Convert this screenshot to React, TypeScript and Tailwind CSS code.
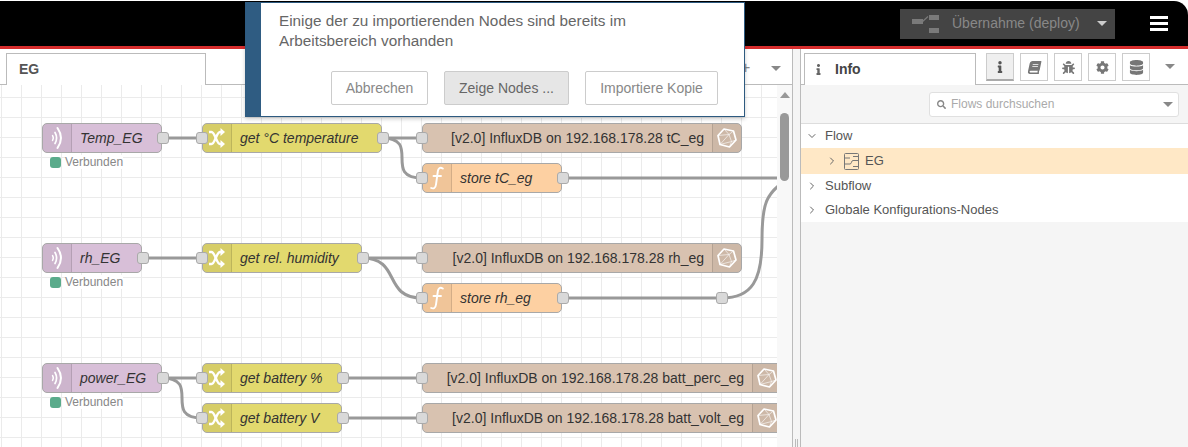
import { FaBook, FaBug, FaCog, FaDatabase, FaInfo, FaSearch } from "react-icons/fa";
import { ChevronDown, ChevronRight } from "lucide-react";

type NodeKind = "mqtt" | "change" | "function" | "influx";

type FlowNode = {
  label: string;
  kind: NodeKind;
  x: number;
  y: number;
  w: number;
  status?: boolean;
};

const nodes: FlowNode[] = [
  { label: "Temp_EG", kind: "mqtt", x: 42, y: 123, w: 120, status: true },
  { label: "get °C temperature", kind: "change", x: 202, y: 123, w: 180 },
  { label: "[v2.0] InfluxDB on 192.168.178.28 tC_eg", kind: "influx", x: 422, y: 123, w: 320 },
  { label: "store tC_eg", kind: "function", x: 422, y: 163, w: 140 },
  { label: "rh_EG", kind: "mqtt", x: 42, y: 243, w: 100, status: true },
  { label: "get rel. humidity", kind: "change", x: 202, y: 243, w: 160 },
  { label: "[v2.0] InfluxDB on 192.168.178.28 rh_eg", kind: "influx", x: 422, y: 243, w: 320 },
  { label: "store rh_eg", kind: "function", x: 422, y: 283, w: 140 },
  { label: "power_EG", kind: "mqtt", x: 42, y: 363, w: 120, status: true },
  { label: "get battery %", kind: "change", x: 202, y: 363, w: 140 },
  { label: "get battery V", kind: "change", x: 202, y: 403, w: 140 },
  { label: "[v2.0] InfluxDB on 192.168.178.28 batt_perc_eg", kind: "influx", x: 422, y: 363, w: 360 },
  { label: "[v2.0] InfluxDB on 192.168.178.28 batt_volt_eg", kind: "influx", x: 422, y: 403, w: 360 },
];

const wires = [
  "M162 138H202",
  "M382 138H422",
  "M382 138C422 138 382 178 422 178",
  "M562 178H790",
  "M142 258H202",
  "M362 258H422",
  "M362 258C402 258 382 298 422 298",
  "M562 298H722",
  "M722 298C752 298 762 280 762 240C762 205 765 192 790 178",
  "M162 378H202",
  "M162 378C202 378 162 418 202 418",
  "M342 378H422",
  "M342 418H422",
];

const nodeColors: Record<NodeKind, string> = {
  mqtt: "bg-[#d8bfd8]",
  change: "bg-[#e2d96e]",
  function: "bg-[#fdd0a2]",
  influx: "bg-[#d8c2b0]",
};

function MqttIcon() {
  return (
    <svg width="12" height="24" viewBox="0 0 12 24" fill="none" stroke="#fff" strokeLinecap="round">
      <path d="M1.5 9.5C2.5 11 2.5 13 1.5 14.5" strokeWidth="1.4" />
      <path d="M4 6.5C6 10 6 14 4 17.5" strokeWidth="1.7" />
      <path d="M6.5 2C11 8.5 11 15.5 6.5 22" strokeWidth="2" />
    </svg>
  );
}

function ShuffleIcon() {
  return (
    <svg width="16" height="20" viewBox="0 0 16 20">
      <path d="M0 4H2.5C6 4 7.5 16 11 16H12" fill="none" stroke="#fff" strokeWidth="2.4" />
      <path d="M0 16H2.5C6 16 7.5 4 11 4H12" fill="none" stroke="#fff" strokeWidth="2.4" />
      <path d="M11.5 0L16 4L11.5 8ZM11.5 12L16 16L11.5 20Z" fill="#fff" />
    </svg>
  );
}

function FunctionIcon() {
  return (
    <svg width="14" height="24" viewBox="0 0 14 24" fill="none" stroke="#fff" strokeWidth="1.9" strokeLinecap="round">
      <path d="M12.8 2.5C9.8 0.8 8.2 2.5 7.8 5.5L6 18.5C5.6 22 3.5 23 1.2 22" />
      <path d="M3.5 10H11" />
    </svg>
  );
}

function InfluxIcon() {
  return (
    <svg width="20" height="20" viewBox="0 0 20 20" fill="none" stroke="#fff" strokeLinejoin="round">
      <path d="M7 1L16.5 3L19 12L12.5 19L3 16.5L1 7.5Z" strokeWidth="1.7" />
      <path d="M1 7.5L12 6.5L16.5 3M12 6.5L14.5 13.5L3 16.5L12 6.5M14.5 13.5L19 12M14.5 13.5L12.5 19M7 1L12 6.5" strokeWidth="0.6" />
    </svg>
  );
}

function Port({ side }: { side: "left" | "right" }) {
  return (
    <span
      className={`absolute top-[7.5px] h-[12px] w-[12px] rounded-[3px] border border-[#aaa] bg-[#d9d9d9] ${
        side === "left" ? "left-[-7.5px]" : "right-[-7.5px]"
      }`}
    />
  );
}

function CanvasNode({ node }: { node: FlowNode }) {
  const { kind } = node;
  const iconRight = kind === "influx";
  return (
    <div className="absolute" style={{ left: node.x, top: node.y - 85, width: node.w }}>
      <div
        className={`relative flex h-[30px] items-center rounded-[5px] border-[1.5px] border-[#a8a8a8] text-[14px] text-[#333] ${nodeColors[kind]}`}
      >
        {!iconRight && (
          <span className="flex h-full w-[29px] shrink-0 items-center justify-center rounded-l-[4px] border-r border-[#0000001f] bg-[#0000000d]">
            {kind === "mqtt" && <MqttIcon />}
            {kind === "change" && <ShuffleIcon />}
            {kind === "function" && <FunctionIcon />}
          </span>
        )}
        <span className={`flex-1 whitespace-nowrap ${iconRight ? "pr-2 text-right" : "pl-[8px] italic"}`}>
          {node.label}
        </span>
        {iconRight && (
          <span className="flex h-full w-[29px] shrink-0 items-center justify-center rounded-r-[4px] border-l border-[#0000001f] bg-[#0000000d]">
            <InfluxIcon />
          </span>
        )}
        {kind !== "mqtt" && <Port side="left" />}
        {kind !== "influx" && <Port side="right" />}
      </div>
      {node.status && (
        <div className="mt-[2px] ml-2 flex items-center gap-1 text-[12px] leading-[14px] text-[#888]">
          <span className="h-[11px] w-[11px] rounded-[3px] bg-[#5aab8b]" />
          <span className="bg-white">Verbunden</span>
        </div>
      )}
    </div>
  );
}

function DeployIcon() {
  return (
    <svg width="28" height="18" viewBox="0 0 28 18" fill="#7a7a7a">
      <rect x="0" y="4" width="11" height="5" />
      <rect x="17" y="0" width="10" height="5" />
      <rect x="17" y="13" width="10" height="5" />
      <path d="M10 7L16 1.5" stroke="#7a7a7a" strokeWidth="1.2" />
    </svg>
  );
}

function Caret({ className }: { className: string }) {
  return <span className={`block h-0 w-0 border-x-[5px] border-t-[5px] border-x-transparent ${className}`} />;
}

function Header() {
  return (
    <header className="mt-px flex h-[48px] items-center justify-end rounded-tr-[14px] border-b-[3px] border-[#d62d2d] bg-black">
      <div className="flex h-[30px] w-[215px] items-center bg-[#444] pl-3 pr-[8px] text-[14px] text-[#888]">
        <DeployIcon />
        <span className="ml-[12px] flex-1 whitespace-nowrap">Übernahme (deploy)</span>
        <Caret className="border-t-[#ccc]" />
      </div>
      <div className="mr-[20px] ml-[35px] flex w-[18px] flex-col gap-[3px]">
        <span className="h-[3px] bg-white" />
        <span className="h-[3px] bg-white" />
        <span className="h-[3px] bg-white" />
      </div>
    </header>
  );
}

function Workspace() {
  return (
    <div className="flex w-[792px] shrink-0 flex-col">
      <div className="relative flex h-[36px] border-b border-[#bbb] pt-[4px] pl-[6px]">
        <div className="mb-[-1px] flex w-[200px] items-center border border-b-0 border-[#bbb] bg-white pl-[12px] text-[14px] font-bold text-[#555]">
          EG
        </div>
        <span className="absolute top-[11px] left-[741px] text-[16px] leading-[16px] text-[#888]">+</span>
        <Caret className="absolute top-[17px] left-[771px] border-t-[#888]" />
      </div>
      <div className="flex min-h-0 flex-1">
        <div className="relative h-[362px] w-[777px] shrink-0 overflow-hidden bg-white bg-[linear-gradient(#ebebeb_1px,transparent_1px),linear-gradient(90deg,#ebebeb_1px,transparent_1px)] bg-[size:20px_20px] bg-[position:1px_12px]">
          <svg
            className="absolute inset-0"
            width="777"
            height="362"
            viewBox="0 85 777 362"
            fill="none"
            stroke="#999"
            strokeWidth="3"
          >
            {wires.map((d) => (
              <path key={d} d={d} />
            ))}
          </svg>
          {nodes.map((node) => (
            <CanvasNode key={node.label} node={node} />
          ))}
          <span className="absolute top-[207px] left-[716px] h-[12px] w-[12px] rounded-[3px] border border-[#aaa] bg-[#d9d9d9]" />
        </div>
        <div className="flex w-[15px] flex-col items-center bg-[#f8f8f8] pt-[7px]">
          <span className="block h-0 w-0 border-x-[5px] border-b-[6px] border-x-transparent border-b-[#999]" />
          <span className="mt-[15px] h-[68px] w-[9px] rounded-[5px] bg-[#999]" />
        </div>
      </div>
    </div>
  );
}

function TreeRow({ label, open }: { label: string; open?: boolean }) {
  return (
    <div className="flex h-[24px] items-center pb-[1px] pl-[5px] text-[13px] text-[#555]">
      {open ? (
        <ChevronDown className="h-[12px] w-[12px] text-[#666]" />
      ) : (
        <ChevronRight className="h-[12px] w-[12px] text-[#666]" />
      )}
      <span className="ml-[7px]">{label}</span>
    </div>
  );
}

function FlowIcon() {
  return (
    <svg width="15" height="17" viewBox="0 0 15 17" fill="none" stroke="#777" strokeWidth="1">
      <rect x="0.5" y="0.5" width="14" height="16" rx="1" />
      <path d="M0.5 5H6M0.5 11H6M9 3.5H14.5M9 7.5H14.5M9 13.5H14.5M6 11C8 11 7 7.5 9 7.5" />
    </svg>
  );
}

function Sidebar() {
  const tools = [FaBook, FaBug, FaCog, FaDatabase];
  return (
    <div className="flex min-w-0 flex-1 flex-col">
      <div className="relative flex h-[36px] border-b border-[#bbb] pt-[4px] pl-[3px]">
        <div className="mb-[-1px] flex w-[172px] items-center border border-b-0 border-[#bbb] bg-white pl-[8px] text-[14px] font-bold text-[#444]">
          <FaInfo className="text-[11px] text-[#666]" />
          <span className="ml-[11px]">Info</span>
        </div>
        <div className="ml-[10px] flex h-[28px] w-[28px] items-center justify-center border border-b-2 border-[#ccc] border-b-[#aaa] bg-[#efefef]">
          <FaInfo className="text-[12px] text-[#555]" />
        </div>
        {tools.map((Icon, i) => (
          <div key={i} className="ml-[6px] flex h-[28px] w-[28px] items-center justify-center border border-[#ccc] bg-white">
            <Icon className={`text-[#777] ${i === 0 ? "-skew-x-12 text-[13px]" : i === 3 ? "text-[15px]" : "text-[13px]"}`} />
          </div>
        ))}
        <Caret className="ml-[15px] mt-[11px] border-t-[#888]" />
      </div>
      <div className="flex h-[39px] items-center justify-end border-b border-[#ddd] bg-[#f5f5f5] pr-[9px]">
        <div className="flex h-[25px] w-[250px] items-center rounded-[3px] border border-[#e0e0e0] bg-white pl-[7px] pr-[5px] text-[12px] text-[#aaa]">
          <FaSearch className="text-[9px] text-[#888]" />
          <span className="ml-[5px] flex-1">Flows durchsuchen</span>
          <Caret className="border-t-[#888]" />
        </div>
      </div>
      <div className="flex h-[98px] flex-col bg-white">
        <TreeRow label="Flow" open />
        <div className="flex h-[26px] items-center bg-[#ffe8c6] pl-[25px] text-[13px] text-[#555]">
          <ChevronRight className="h-[12px] w-[12px] text-[#666]" />
          <span className="ml-[6px]">
            <FlowIcon />
          </span>
          <span className="ml-[6px]">EG</span>
        </div>
        <TreeRow label="Subflow" />
        <TreeRow label="Globale Konfigurations-Nodes" />
      </div>
      <div className="flex-1 bg-[#f5f5f5]" />
    </div>
  );
}

function ImportDialog() {
  const base = "flex h-[34px] items-center justify-center rounded-[2px] border text-[14px] text-[#888]";
  return (
    <div className="absolute top-[2px] left-[245px] flex h-[115px] w-[500px] border border-[#2d5a80] bg-white shadow-[0_2px_4px_#0003]">
      <div className="w-[15px] shrink-0 bg-[#2f5c82]" />
      <div className="flex-1">
        <p className="mt-[8px] ml-[18px] text-[15.3px] leading-[20px] text-[#666]">
          Einige der zu importierenden Nodes sind bereits im
          <br />
          Arbeitsbereich vorhanden
        </p>
        <div className="mt-[20px] ml-[70px] flex gap-[16px]">
          <button className={`${base} w-[97px] border-[#ccc] bg-white`}>Abbrechen</button>
          <button className={`${base} w-[125px] border-[#ccc] bg-[#e6e6e6] !text-[#666]`}>Zeige Nodes ...</button>
          <button className={`${base} w-[133px] border-[#ccc] bg-white`}>Importiere Kopie</button>
        </div>
      </div>
    </div>
  );
}

export default function App() {
  return (
    <div className="relative flex h-[447px] w-[1188px] flex-col overflow-hidden bg-white font-['Liberation_Sans',Arial,sans-serif]">
      <Header />
      <div className="flex min-h-0 flex-1">
        <Workspace />
        {/* Separator between workspace and sidebar */}
        <div className="relative w-[9px] shrink-0 border-x border-[#bbb] bg-[#f5f5f5]">
          <span className="absolute top-[390px] left-[2px] h-[8px] w-[3px] border-x border-[#bbb]" />
        </div>
        <Sidebar />
      </div>
      <ImportDialog />
    </div>
  );
}
